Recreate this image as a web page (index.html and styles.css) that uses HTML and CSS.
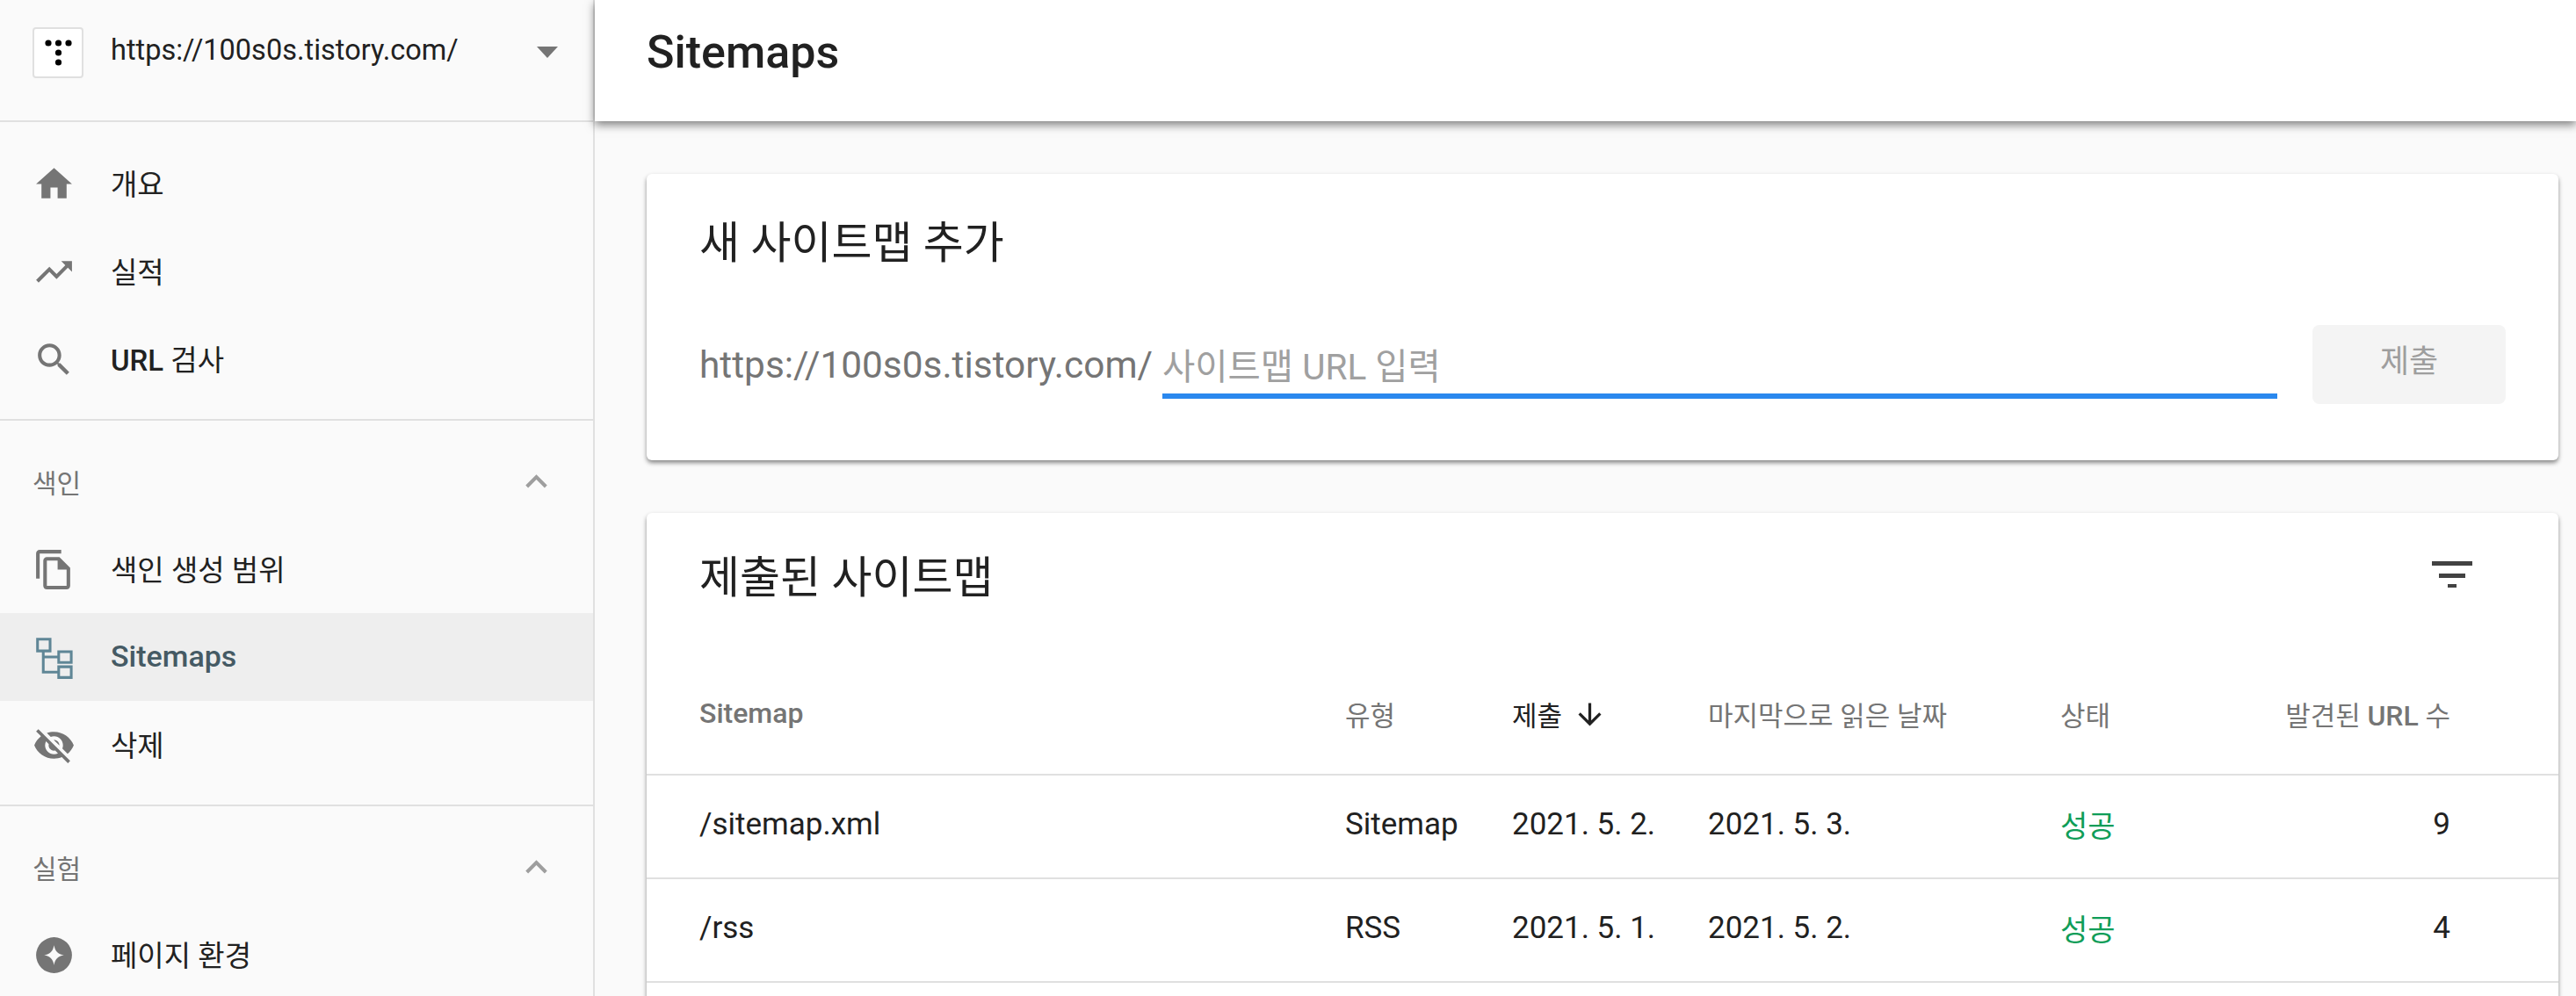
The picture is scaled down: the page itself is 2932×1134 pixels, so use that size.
FILE: index.html
```html
<!DOCTYPE html>
<html lang="ko">
<head>
    <meta charset="UTF-8">
    <title>Sitemaps</title>
    <link rel="stylesheet" href="styles.css">
</head>
<body>

<div class="app">
    <!-- Sidebar -->
    <aside class="sidebar">
        <div class="site-picker">
            <div class="site-logo">
                <svg viewBox="0 0 54 54" width="54" height="54">
                    <circle cx="16" cy="16" r="3.6"/>
                    <circle cx="27.5" cy="16" r="3.6"/>
                    <circle cx="39" cy="16" r="3.6"/>
                    <circle cx="27.5" cy="27" r="3.6"/>
                    <circle cx="27.5" cy="38" r="3.6"/>
                </svg>
            </div>
            <span class="site-url">https://100s0s.tistory.com/</span>
            <div class="caret"></div>
        </div>

        <nav class="nav-group nav-top">
            <a class="nav-item">
                <svg class="nav-icon" viewBox="0 0 24 24"><path d="M10 20v-6h4v6h5v-8h3L12 3 2 12h3v8z"/></svg>
                <span>개요</span>
            </a>
            <a class="nav-item">
                <svg class="nav-icon" viewBox="0 0 24 24"><path d="M16 6l2.29 2.29-4.88 4.88-4-4L2 16.59 3.41 18l6-6 4 4 6.3-6.29L22 12V6z"/></svg>
                <span>실적</span>
            </a>
            <a class="nav-item">
                <svg class="nav-icon" viewBox="0 0 24 24"><path d="M15.5 14h-.79l-.28-.27C15.41 12.59 16 11.11 16 9.5 16 5.91 13.09 3 9.5 3S3 5.91 3 9.5 5.91 16 9.5 16c1.61 0 3.09-.59 4.23-1.57l.27.28v.79l5 4.99L20.49 19l-4.99-5zm-6 0C7.01 14 5 11.99 5 9.5S7.01 5 9.5 5 14 7.01 14 9.5 11.99 14 9.5 14z"/></svg>
                <span><b class="latin">URL</b> 검사</span>
            </a>
        </nav>

        <nav class="nav-group">
            <div class="nav-heading">
                <span>색인</span>
                <svg class="chevron" viewBox="0 0 24 24"><path d="M12 8l-6 6 1.41 1.41L12 10.83l4.59 4.58L18 14z"/></svg>
            </div>
            <a class="nav-item">
                <svg class="nav-icon" viewBox="0 0 24 24"><path d="M16 1H4c-1.1 0-2 .9-2 2v14h2V3h12V1zm-1 4H8c-1.1 0-1.99.9-1.99 2L6 21c0 1.1.89 2 1.99 2H19c1.1 0 2-.9 2-2V11l-6-6zM8 21V7h6v5h5v9H8z"/></svg>
                <span>색인 생성 범위</span>
            </a>
            <a class="nav-item active">
                <svg class="nav-icon" viewBox="0 0 24 24">
                    <path class="tree" d="M2.8 1.8h7v6.6h-7zM14.6 8.8h7v6h-7zM14.6 17.2h7v6h-7zM6 8.4v11.8h8.6M6 11.8h8.6"/>
                </svg>
                <span>Sitemaps</span>
            </a>
            <a class="nav-item">
                <svg class="nav-icon" viewBox="0 0 24 24"><path d="M12 7c2.76 0 5 2.24 5 5 0 .65-.13 1.26-.36 1.83l2.92 2.92c1.51-1.26 2.7-2.89 3.43-4.75-1.73-4.39-6-7.5-11-7.5-1.4 0-2.74.25-3.98.7l2.16 2.16C10.74 7.13 11.35 7 12 7zM2 4.27l2.28 2.28.46.46C3.08 8.3 1.78 10.02 1 12c1.73 4.39 6 7.5 11 7.5 1.55 0 3.03-.3 4.38-.84l.42.42L19.73 22 21 20.73 3.27 3 2 4.27zM7.53 9.8l1.55 1.55c-.05.21-.08.43-.08.65 0 1.66 1.34 3 3 3 .22 0 .44-.03.65-.08l1.55 1.55c-.67.33-1.41.53-2.2.53-2.76 0-5-2.24-5-5 0-.79.2-1.53.53-2.2zm4.31-.78l3.15 3.15.02-.16c0-1.66-1.34-3-3-3l-.17.01z"/></svg>
                <span>삭제</span>
            </a>
        </nav>

        <nav class="nav-group">
            <div class="nav-heading">
                <span>실험</span>
                <svg class="chevron" viewBox="0 0 24 24"><path d="M12 8l-6 6 1.41 1.41L12 10.83l4.59 4.58L18 14z"/></svg>
            </div>
            <a class="nav-item">
                <svg class="nav-icon" viewBox="0 0 24 24"><path fill-rule="evenodd" d="M12 2a10 10 0 1 0 0 20 10 10 0 0 0 0-20zm0 4.5c.6 3.3 2.2 4.9 5.5 5.5-3.3.6-4.9 2.2-5.5 5.5-.6-3.3-2.2-4.9-5.5-5.5 3.3-.6 4.9-2.2 5.5-5.5z"/></svg>
                <span>페이지 환경</span>
            </a>
        </nav>
    </aside>

    <!-- Main content -->
    <main class="main">
        <header class="page-header">
            <h1>Sitemaps</h1>
        </header>

        <div class="content">
            <section class="card add-card">
                <h2>새 사이트맵 추가</h2>
                <div class="add-row">
                    <span class="url-prefix">https://100s0s.tistory.com/</span>
                    <input class="url-input" type="text" placeholder="사이트맵 URL 입력">
                    <button class="submit-btn">제출</button>
                </div>
            </section>

            <section class="card list-card">
                <div class="card-head">
                    <h2>제출된 사이트맵</h2>
                    <svg class="filter-icon" viewBox="0 0 46 30" width="46" height="30">
                        <path d="M0 0h46v5H0zM8 14h30v5H8zM18 26h10v4H18z"/>
                    </svg>
                </div>
                <table>
                    <thead>
                        <tr>
                            <th class="col-path"><b class="latin">Sitemap</b></th>
                            <th class="col-type">유형</th>
                            <th class="col-date sorted">제출 <svg class="sort-icon" viewBox="0 0 24 24"><path d="M20 12l-1.41-1.41L13 16.17V4h-2v12.17l-5.58-5.59L4 12l8 8 8-8z"/></svg></th>
                            <th class="col-read">마지막으로 읽은 날짜</th>
                            <th class="col-status">상태</th>
                            <th class="col-count">발견된 <b class="latin">URL</b> 수</th>
                        </tr>
                    </thead>
                    <tbody>
                        <tr>
                            <td class="col-path">/sitemap.xml</td>
                            <td>Sitemap</td>
                            <td>2021. 5. 2.</td>
                            <td>2021. 5. 3.</td>
                            <td class="ok">성공</td>
                            <td class="col-count">9</td>
                        </tr>
                        <tr>
                            <td class="col-path">/rss</td>
                            <td>RSS</td>
                            <td>2021. 5. 1.</td>
                            <td>2021. 5. 2.</td>
                            <td class="ok">성공</td>
                            <td class="col-count">4</td>
                        </tr>
                    </tbody>
                </table>
            </section>
        </div>
    </main>
</div>

</body>
</html>
```

FILE: styles.css
```css
* {
    box-sizing: border-box;
}
html, body {
    margin: 0;
    height: 100%;
    overflow: hidden;
}
body {
    font-family: Roboto, "Noto Sans CJK KR", sans-serif;
    background-color: #fafafa;
    color: #212121;
}
h1, h2 {
    margin: 0;
    font-weight: 400;
}
.latin {
    font-weight: 500;
}
.app {
    display: flex;
    height: 1134px;
    overflow: hidden;
}

/* Sidebar */
.sidebar {
    width: 677px;
    flex-shrink: 0;
    background-color: #fafafa;
    border-right: 2px solid #e0e0e0;
    overflow: hidden;
}
.site-picker {
    height: 139px;
    display: flex;
    align-items: flex-start;
    padding: 31px 40px 0 37px;
    border-bottom: 2px solid #e0e0e0;
}
.site-logo {
    width: 58px;
    height: 58px;
    background-color: #fff;
    border: 2px solid #e0e0e0;
    border-radius: 4px;
}
.site-url {
    margin: 3px 0 0 31px;
    font-size: 32.5px;
    line-height: 46px;
    flex: 1;
}
.caret {
    margin-top: 22px;
    width: 0;
    height: 0;
    border-left: 12.5px solid transparent;
    border-right: 12.5px solid transparent;
    border-top: 13px solid #757575;
}
.nav-group {
    border-bottom: 2px solid #e0e0e0;
    padding: 19px 0 18px;
}
.nav-group:last-child {
    border-bottom: none;
}
.nav-top {
    padding-top: 20px;
}
.nav-item {
    height: 100px;
    display: flex;
    align-items: center;
    padding-left: 37px;
    font-size: 33px;
    color: #212121;
}
.nav-item span {
    margin-bottom: 3px;
}
.nav-icon {
    width: 49px;
    height: 49px;
    margin-right: 40px;
    fill: #757575;
    flex-shrink: 0;
}
.nav-item.active {
    background-color: #eeeeee;
    color: #455a64;
    font-size: 34px;
    font-weight: 500;
}
.tree {
    fill: none;
    stroke: #5f8696;
    stroke-width: 1.5;
}
.nav-heading {
    height: 100px;
    display: flex;
    align-items: center;
    justify-content: space-between;
    padding: 0 40px 0 37px;
    font-size: 30px;
    color: #757575;
}
.chevron {
    width: 49px;
    height: 49px;
    fill: #9e9e9e;
}

/* Main */
.main {
    flex: 1;
    min-width: 0;
    background-color: #fafafa;
}
.page-header {
    height: 138px;
    background-color: #fff;
    padding-left: 59px;
    display: flex;
    align-items: center;
    box-shadow: 0 4px 10px rgba(0, 0, 0, 0.5);
    position: relative;
}
.page-header h1 {
    font-size: 52px;
    font-weight: 500;
    margin-top: -20px;
}
.content {
    padding: 60px 20px 0 59px;
}
.card {
    background-color: #fff;
    border-radius: 6px;
    box-shadow: 0 3px 5px rgba(0, 0, 0, 0.45);
}
.card h2 {
    font-size: 50px;
    line-height: 60px;
}
.add-card {
    height: 326px;
    padding: 49px 60px 0 60px;
    margin-bottom: 60px;
}
.add-row {
    display: flex;
    align-items: flex-start;
    margin-top: 63px;
}
.url-prefix {
    margin: 16px 11px 0 0;
    font-size: 42.4px;
    line-height: 60px;
    color: #757575;
}
.url-input {
    flex: 1;
    min-width: 0;
    height: 66px;
    margin-top: 18px;
    padding: 0;
    border: none;
    border-bottom: 6px solid #2a88ee;
    outline: none;
    background: none;
    font-family: inherit;
    font-size: 40.5px;
}
.url-input::placeholder {
    color: #a0a0a0;
    opacity: 1;
}
.submit-btn {
    width: 220px;
    height: 90px;
    margin-left: 40px;
    padding: 0 0 14px;
    background-color: #f4f4f4;
    color: #9e9e9e;
    border: none;
    border-radius: 8px;
    font-family: inherit;
    font-size: 36px;
    font-weight: 400;
}
.list-card {
    height: 700px;
}
.card-head {
    height: 148px;
    margin-bottom: 11px;
    display: flex;
    align-items: center;
    justify-content: space-between;
    padding: 0 98px 0 60px;
}
.filter-icon {
    fill: #424242;
    margin-top: -8px;
}
table {
    width: 100%;
    table-layout: fixed;
    border-collapse: separate;
    border-spacing: 0;
}
th, td {
    padding: 0;
    text-align: left;
    border-bottom: 2px solid #e0e0e0;
}
th {
    height: 140px;
    font-size: 31px;
    font-weight: 400;
    color: #757575;
}
th .latin {
    font-size: 32px;
}
td {
    height: 118px;
    font-size: 35px;
    padding-bottom: 6px;
}
th.sorted {
    color: #212121;
}
.sort-icon {
    width: 39px;
    height: 39px;
    margin: -8px 0 0 4px;
    vertical-align: middle;
    fill: #212121;
}
.col-path {
    width: 795px;
    padding-left: 60px;
}
.col-type {
    width: 190px;
}
.col-date {
    width: 223px;
}
.col-read {
    width: 401px;
}
.col-status {
    width: 244px;
}
td.col-count, th.col-count {
    text-align: right;
    padding-right: 123px;
}
td.ok {
    color: #0f9d58;
    font-size: 34px;
}
```
